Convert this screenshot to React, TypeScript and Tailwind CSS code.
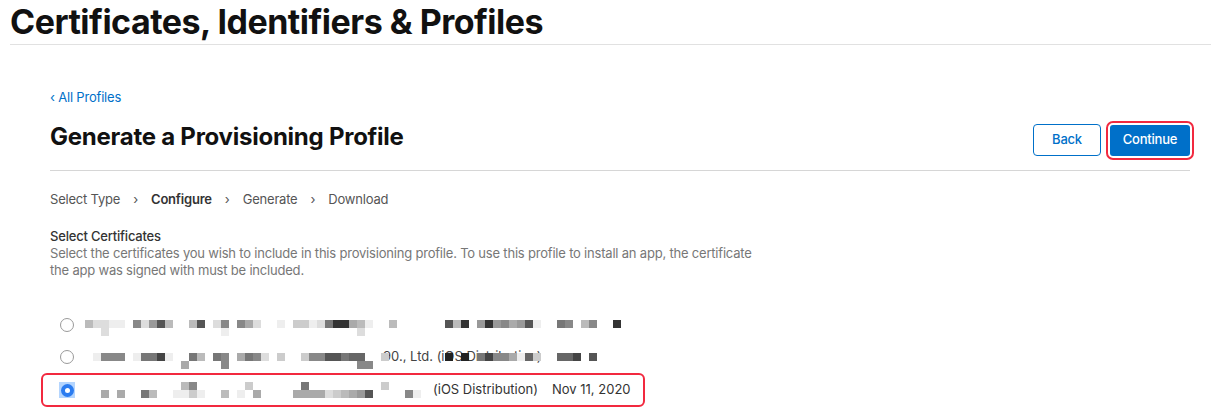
import React from "react";

type Mosaic = { top: number; cells: string }[];

// pixelated (redacted) certificate names, one char = one 8px cell, "." = empty
const ROW1: Mosaic = [
  { top: 7, cells: "bddee.8d95bf.b5.d8.8adf.e.cced733abe..b.f....5b3.9398a95e..78.b8.f3f" },
  { top: 15, cells: "..d..............e................d" },
];
const ROW2: Mosaic = [
  { top: 8, cells: ".e888.e774e..7b.78.a78d.c.fc8855766..c.......2.2.7488ae6c..664.5....f" },
  { top: 16, cells: "............a....8................88" },
];
const ROW3: Mosaic = [
  { top: 4, cells: "...f........b8......c......7.........c" },
  { top: 12, cells: "..a.a..7b..eece..b.e.a....aaaadcba95....8e" },
];

const shade = (c: string) => {
  const v = parseInt(c, 16) * 17;
  return `rgb(${v},${v},${v})`;
};

const Pixels = ({ rows, width }: { rows: Mosaic; width: number }) => (
  <svg width={width} height={24} viewBox={`0 0 ${width} 24`} className="block shrink-0">
    {rows.map((r, ri) =>
      r.cells.split("").map((c, i) =>
        c === "." ? null : (
          <rect key={`${ri}-${i}`} x={i * 8} y={r.top} width={8} height={8} fill={shade(c)} />
        )
      )
    )}
  </svg>
);

const Radio = ({ checked }: { checked?: boolean }) =>
  checked ? (
    <span className="flex h-[16px] w-[16px] items-center justify-center bg-[#b4d5fe]">
      <span className="flex h-[13px] w-[13px] items-center justify-center rounded-full bg-[#2b7cf0]">
        <span className="h-[5px] w-[5px] rounded-full bg-white" />
      </span>
    </span>
  ) : (
    <span className="flex h-[16px] w-[16px] items-center justify-center">
      <span className="h-[14px] w-[14px] rounded-full border border-[#9a9a9a] bg-white" />
    </span>
  );

const Chevron = () => <span className="px-[13px] text-[#555]">›</span>;

export default function App() {
  return (
    <div className="min-h-screen bg-white text-[#1d1d1f]" style={{ fontFamily: "Inter, 'Noto Sans', sans-serif" }}>
      <div className="pl-[10px]">
        <h1 className="h-[45px] border-b border-[#e1e1e1] text-[34px] font-bold leading-[44px] tracking-[-0.5px] text-[#111]">
          Certificates, Identifiers &amp; Profiles
        </h1>
      </div>

      <div className="pl-[50px] pr-[21px] tracking-[-0.2px]">
        <div className="pt-[44px] text-[13px] leading-[16px] text-[#0070c9]">‹ All Profiles</div>

        <div className="flex items-center justify-between border-b border-[#d6d6d6] pb-[13px] pt-[18px]">
          <h2 className="pb-[6px] text-[24px] font-bold leading-[28px] tracking-[-0.25px] text-[#111]">
            Generate a Provisioning Profile
          </h2>
          <div className="flex items-center gap-[9px]">
            <button className="h-[32px] w-[68px] rounded-[4px] border border-[#0070c9] bg-white text-[13px] font-medium text-[#0070c9]">
              Back
            </button>
            <button className="h-[31px] w-[80px] rounded-[3px] bg-[#0070c9] text-[13px] font-medium text-white outline-2 outline-offset-2 outline-[#f2293f] [outline-style:solid]">
              Continue
            </button>
          </div>
        </div>

        <div className="flex items-center pt-[19px] text-[13px] leading-[18px] text-[#555]">
          <span>Select Type</span>
          <Chevron />
          <span className="font-semibold text-[#333]">Configure</span>
          <Chevron />
          <span>Generate</span>
          <Chevron />
          <span>Download</span>
        </div>

        <div className="pt-[20px] text-[13px] font-medium leading-[17px] text-[#333]">Select Certificates</div>
        <p className="text-[13px] leading-[17px] text-[#777]">
          Select the certificates you wish to include in this provisioning profile. To use this profile to install an
          app, the certificate
          <br />
          the app was signed with must be included.
        </p>

        <div className="pt-[30px]">
          <div className="flex h-[32px] items-center pl-[9px]">
            <Radio />
            <span className="w-[10px]" />
            <Pixels rows={ROW1} width={552} />
          </div>
          <div className="flex h-[32px] items-center pl-[9px]">
            <Radio />
            <span className="w-[10px]" />
            <div className="relative">
              <span className="block pl-[298px] text-[13px] tracking-normal text-[#444]">90., Ltd. (iOS Distribution)</span>
              <div className="absolute left-0 top-1/2 -translate-y-1/2">
                <Pixels rows={ROW2} width={560} />
              </div>
            </div>
          </div>
          <div className="-ml-[9px] flex h-[34px] w-[604px] items-center rounded-[6px] border-2 border-[#f2293f] pl-[16px] tracking-normal">
            <Radio checked />
            <span className="w-[10px]" />
            <Pixels rows={ROW3} width={336} />
            <span className="pl-[12px] text-[13px] text-[#333]">(iOS Distribution)</span>
            <span className="pl-[14px] text-[13px] text-[#333]">Nov 11, 2020</span>
          </div>
        </div>
      </div>
    </div>
  );
}
